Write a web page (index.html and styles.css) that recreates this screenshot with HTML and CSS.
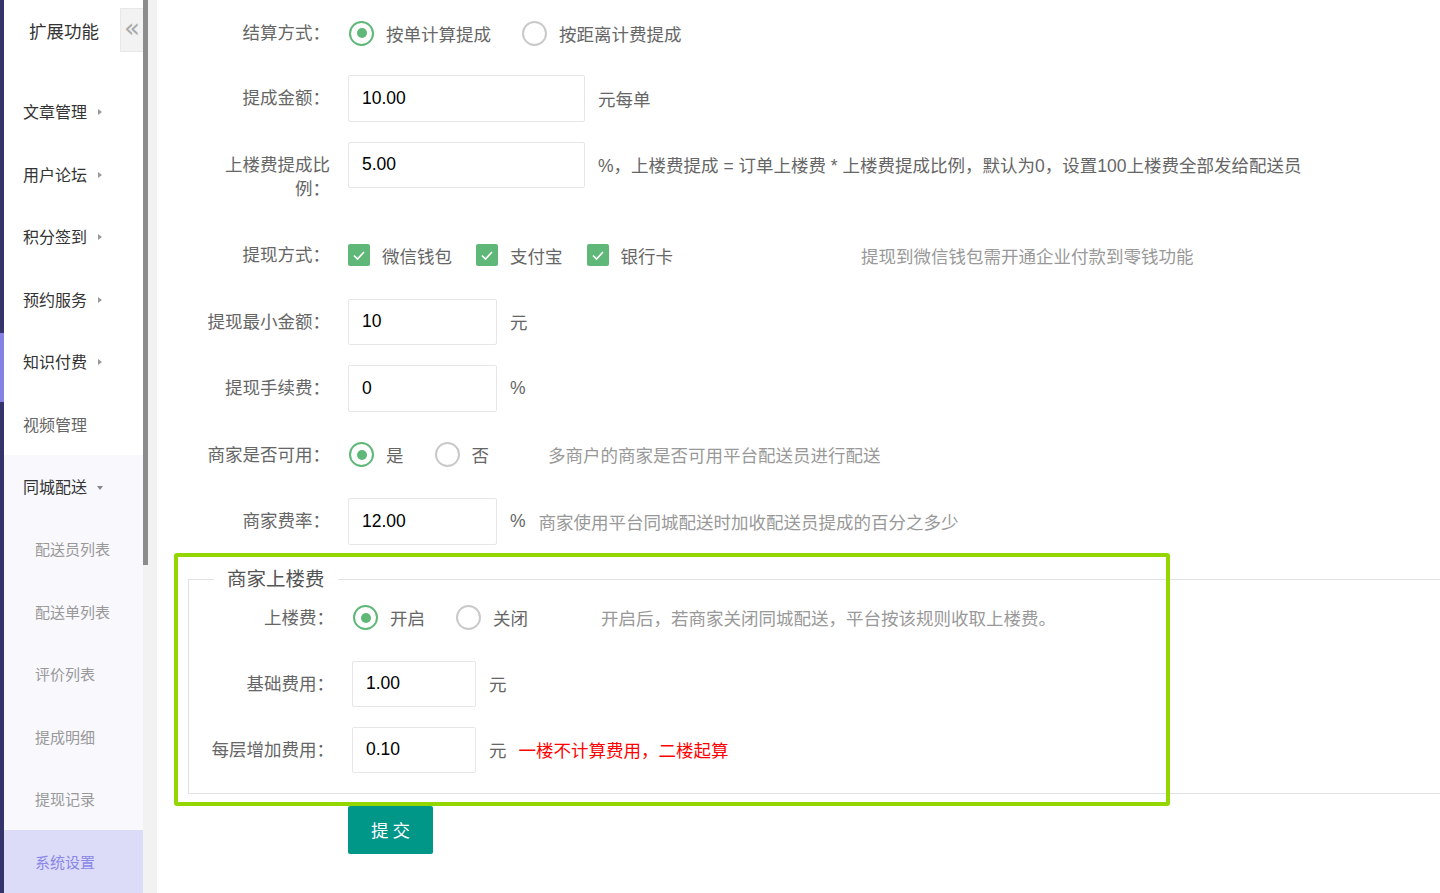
FILE: index.html
```html
<!DOCTYPE html>
<html lang="zh">
<head>
<meta charset="utf-8">
<title>同城配送 - 系统设置</title>
<link rel="stylesheet" href="styles.css">
</head>
<body>
<div class="app">
  <div class="rail"><div class="rail-active"></div></div>
  <aside class="sidebar">
    <div class="side-head">
      <span class="side-title">扩展功能</span>
      <span class="collapse">«</span>
    </div>
    <ul class="menu">
      <li class="menu-item"><span>文章管理</span><i class="tri-right"></i></li>
      <li class="menu-item"><span>用户论坛</span><i class="tri-right"></i></li>
      <li class="menu-item"><span>积分签到</span><i class="tri-right"></i></li>
      <li class="menu-item"><span>预约服务</span><i class="tri-right"></i></li>
      <li class="menu-item"><span>知识付费</span><i class="tri-right"></i></li>
      <li class="menu-item plain"><span>视频管理</span></li>
      <li class="menu-group">
        <div class="menu-item"><span>同城配送</span><i class="tri-down"></i></div>
        <ul class="submenu">
          <li class="sub-item">配送员列表</li>
          <li class="sub-item">配送单列表</li>
          <li class="sub-item">评价列表</li>
          <li class="sub-item">提成明细</li>
          <li class="sub-item">提现记录</li>
          <li class="sub-item active">系统设置</li>
        </ul>
      </li>
    </ul>
  </aside>
  <div class="scroll-track"><div class="scroll-thumb"></div></div>
  <main class="main">
    <div class="form-item first">
      <label class="label">结算方式：</label>
      <div class="field">
        <span class="radio checked"><i class="radio-circle"></i>按单计算提成</span>
        <span class="radio"><i class="radio-circle"></i>按距离计费提成</span>
      </div>
    </div>
    <div class="form-item">
      <label class="label">提成金额：</label>
      <div class="field">
        <input class="input" value="10.00">
        <span class="suffix">元每单</span>
      </div>
    </div>
    <div class="form-item">
      <label class="label">上楼费提成比例：</label>
      <div class="field">
        <input class="input" value="5.00">
        <span class="suffix">%，上楼费提成 = 订单上楼费 * 上楼费提成比例，默认为0，设置100上楼费全部发给配送员</span>
      </div>
    </div>
    <div class="form-item">
      <label class="label">提现方式：</label>
      <div class="field">
        <div class="group group-check">
          <span class="checkbox"><i class="check-box"><svg viewBox="0 0 22 22" width="22" height="22"><polyline points="6,11.5 9.5,15 16,8" fill="none" stroke="#fff" stroke-width="1.6"/></svg></i>微信钱包</span>
          <span class="checkbox"><i class="check-box"><svg viewBox="0 0 22 22" width="22" height="22"><polyline points="6,11.5 9.5,15 16,8" fill="none" stroke="#fff" stroke-width="1.6"/></svg></i>支付宝</span>
          <span class="checkbox"><i class="check-box"><svg viewBox="0 0 22 22" width="22" height="22"><polyline points="6,11.5 9.5,15 16,8" fill="none" stroke="#fff" stroke-width="1.6"/></svg></i>银行卡</span>
        </div>
        <span class="aux">提现到微信钱包需开通企业付款到零钱功能</span>
      </div>
    </div>
    <div class="form-item">
      <label class="label">提现最小金额：</label>
      <div class="field">
        <input class="input short" value="10">
        <span class="suffix">元</span>
      </div>
    </div>
    <div class="form-item">
      <label class="label">提现手续费：</label>
      <div class="field">
        <input class="input short" value="0">
        <span class="suffix">%</span>
      </div>
    </div>
    <div class="form-item">
      <label class="label">商家是否可用：</label>
      <div class="field">
        <div class="group group-avail">
          <span class="radio checked"><i class="radio-circle"></i>是</span>
          <span class="radio"><i class="radio-circle"></i>否</span>
        </div>
        <span class="aux">多商户的商家是否可用平台配送员进行配送</span>
      </div>
    </div>
    <div class="form-item">
      <label class="label">商家费率：</label>
      <div class="field">
        <input class="input short" value="12.00">
        <span class="suffix">%</span>
        <span class="aux aux-tight">商家使用平台同城配送时加收配送员提成的百分之多少</span>
      </div>
    </div>

    <fieldset class="fieldset">
      <legend class="legend">商家上楼费</legend>
      <div class="form-item">
        <label class="label">上楼费：</label>
        <div class="field">
          <div class="group group-floor">
            <span class="radio checked"><i class="radio-circle"></i>开启</span>
            <span class="radio"><i class="radio-circle"></i>关闭</span>
          </div>
          <span class="aux">开启后，若商家关闭同城配送，平台按该规则收取上楼费。</span>
        </div>
      </div>
      <div class="form-item">
        <label class="label">基础费用：</label>
        <div class="field">
          <input class="input mid" value="1.00">
          <span class="suffix">元</span>
        </div>
      </div>
      <div class="form-item">
        <label class="label">每层增加费用：</label>
        <div class="field">
          <input class="input mid" value="0.10">
          <span class="suffix">元</span>
          <span class="warn">一楼不计算费用，二楼起算</span>
        </div>
      </div>
    </fieldset>

    <button class="submit" type="button">提 交</button>
  </main>
  <div class="highlight"></div>
</div>
</body>
</html>
```

FILE: styles.css
```css
html, body {
  margin: 0;
  padding: 0;
  background: #fff;
}
body {
  font-family: "Liberation Sans", "Noto Sans CJK SC", sans-serif;
  color: #666;
}
ul { list-style: none; margin: 0; padding: 0; }

.app {
  position: relative;
  display: flex;
  width: 1440px;
  height: 893px;
  overflow: hidden;
}

/* left rail */
.rail {
  width: 4px;
  flex-shrink: 0;
  background: #35346a;
}
.rail-active {
  margin-top: 333px;
  height: 69px;
  background: #8582e4;
}

/* sidebar */
.sidebar {
  width: 139px;
  flex-shrink: 0;
  background: #fff;
  display: flex;
  flex-direction: column;
}
.side-head {
  height: 80px;
  display: flex;
  align-items: flex-start;
  padding-left: 25px;
  box-sizing: border-box;
}
.side-title {
  margin-top: 19px;
  font-size: 17.5px;
  line-height: 24px;
  color: #333;
  font-family: "Noto Sans CJK SC", sans-serif;
}
.collapse {
  margin-left: auto;
  margin-top: 8px;
  width: 23px;
  height: 44px;
  box-sizing: border-box;
  background: #f2f2f2;
  border: 1px solid #e8e8e8;
  border-right: none;
  color: #a8a8a8;
  font-size: 26px;
  line-height: 38px;
  text-align: center;
  font-family: "DejaVu Sans", sans-serif;
}
.menu {
  flex: 1;
  display: flex;
  flex-direction: column;
}
.menu-item {
  height: 62.5px;
  display: flex;
  align-items: center;
  padding-left: 19px;
  font-size: 16px;
  color: #333;
  font-family: "Noto Sans CJK SC", sans-serif;
}
.menu-item.plain { color: #666; }
.tri-right {
  margin-left: 11px;
  margin-top: 2px;
  width: 0;
  height: 0;
  border-left: 4px solid #999;
  border-top: 3px solid transparent;
  border-bottom: 3px solid transparent;
}
.tri-down {
  margin-left: 10px;
  margin-top: 4px;
  width: 0;
  height: 0;
  border-top: 4px solid #888;
  border-left: 3px solid transparent;
  border-right: 3px solid transparent;
}
.menu-group {
  flex: 1;
  background: #f8f8fd;
}
.sub-item {
  height: 62.5px;
  display: flex;
  align-items: center;
  padding-left: 31px;
  font-size: 15px;
  color: #999;
  font-family: "Noto Sans CJK SC", sans-serif;
}
.sub-item.active {
  background: #dddcf8;
  color: #8a87e6;
}

/* scrollbar */
.scroll-track {
  width: 14px;
  flex-shrink: 0;
  background: #f2f2f2;
}
.scroll-thumb {
  width: 5px;
  height: 565px;
  background: #8c8c8c;
}

/* main form */
.main {
  flex: 1;
  min-width: 0;
  padding-top: 10px;
  overflow: hidden;
  background: #fff;
}
.form-item {
  display: flex;
  align-items: flex-start;
  margin-bottom: 20px;
}
.form-item.first { margin-bottom: 18.5px; }
.label {
  width: 125px;
  flex-shrink: 0;
  margin-left: 48px;
  padding: 11.25px 18px 11.25px 0;
  text-align: right;
  line-height: 24px;
  font-size: 17.5px;
  color: #666;
}
.field {
  min-height: 46.5px;
  display: flex;
  align-items: center;
  font-size: 17.5px;
  color: #666;
  white-space: nowrap;
}
.input {
  width: 237px;
  height: 46.5px;
  box-sizing: border-box;
  border: 1px solid #e6e6e6;
  border-radius: 2px;
  padding: 0 0 0 13px;
  margin: 0;
  font-family: "Liberation Sans", sans-serif;
  font-size: 17.5px;
  color: #000;
  background: #fff;
  outline: none;
}
.input.short { width: 149px; }
.input.mid { width: 124px; }
.suffix {
  margin-left: 13px;
  color: #666;
}
.aux {
  padding-left: 10px;
  color: #999;
}
.aux-tight { padding-left: 13px; }
.warn {
  margin-left: 12px;
  color: #ff0000;
}
.group {
  display: flex;
  align-items: center;
  flex-shrink: 0;
}
.group-check { width: 503px; }
.group-avail { width: 190px; }
.group-floor { width: 239px; }

.radio {
  display: flex;
  align-items: center;
  margin-left: 1px;
  margin-right: 30px;
}
.radio-circle {
  position: relative;
  width: 25px;
  height: 25px;
  box-sizing: border-box;
  border: 2px solid #c9c9c9;
  border-radius: 50%;
  margin-right: 12px;
  flex-shrink: 0;
}
.radio.checked .radio-circle { border-color: #5fb878; }
.radio.checked .radio-circle::after {
  content: "";
  position: absolute;
  left: 5.5px;
  top: 5.5px;
  width: 10px;
  height: 10px;
  border-radius: 50%;
  background: #5fb878;
}
.checkbox {
  display: flex;
  align-items: center;
  margin-right: 24px;
}
.check-box {
  width: 22px;
  height: 22px;
  border-radius: 2px;
  background: #5fb878;
  margin-right: 12px;
  display: flex;
  flex-shrink: 0;
}

/* fieldset */
.fieldset {
  margin: 21.5px -30px 0 31px;
  padding: 2.5px 0 0 20px;
  border: 1px solid #e2e2e2;
  min-width: 0;
}
.fieldset .form-item { margin-bottom: 19.5px; }
.fieldset .label { margin-left: 0; }
.legend {
  margin-left: 5px;
  padding: 0 13px;
  font-size: 19.5px;
  line-height: 26px;
  color: #555;
}

.submit {
  display: block;
  margin: 12px 0 0 191px;
  width: 85px;
  height: 48px;
  border: none;
  border-radius: 2px;
  background: #009688;
  color: #fff;
  font-family: "Noto Sans CJK SC", sans-serif;
  font-size: 17.5px;
  padding: 0;
}

/* annotation overlay */
.highlight {
  position: absolute;
  left: 174px;
  top: 553px;
  width: 996px;
  height: 253px;
  box-sizing: border-box;
  border: 4px solid #94d600;
  border-radius: 3px;
  pointer-events: none;
}
```
